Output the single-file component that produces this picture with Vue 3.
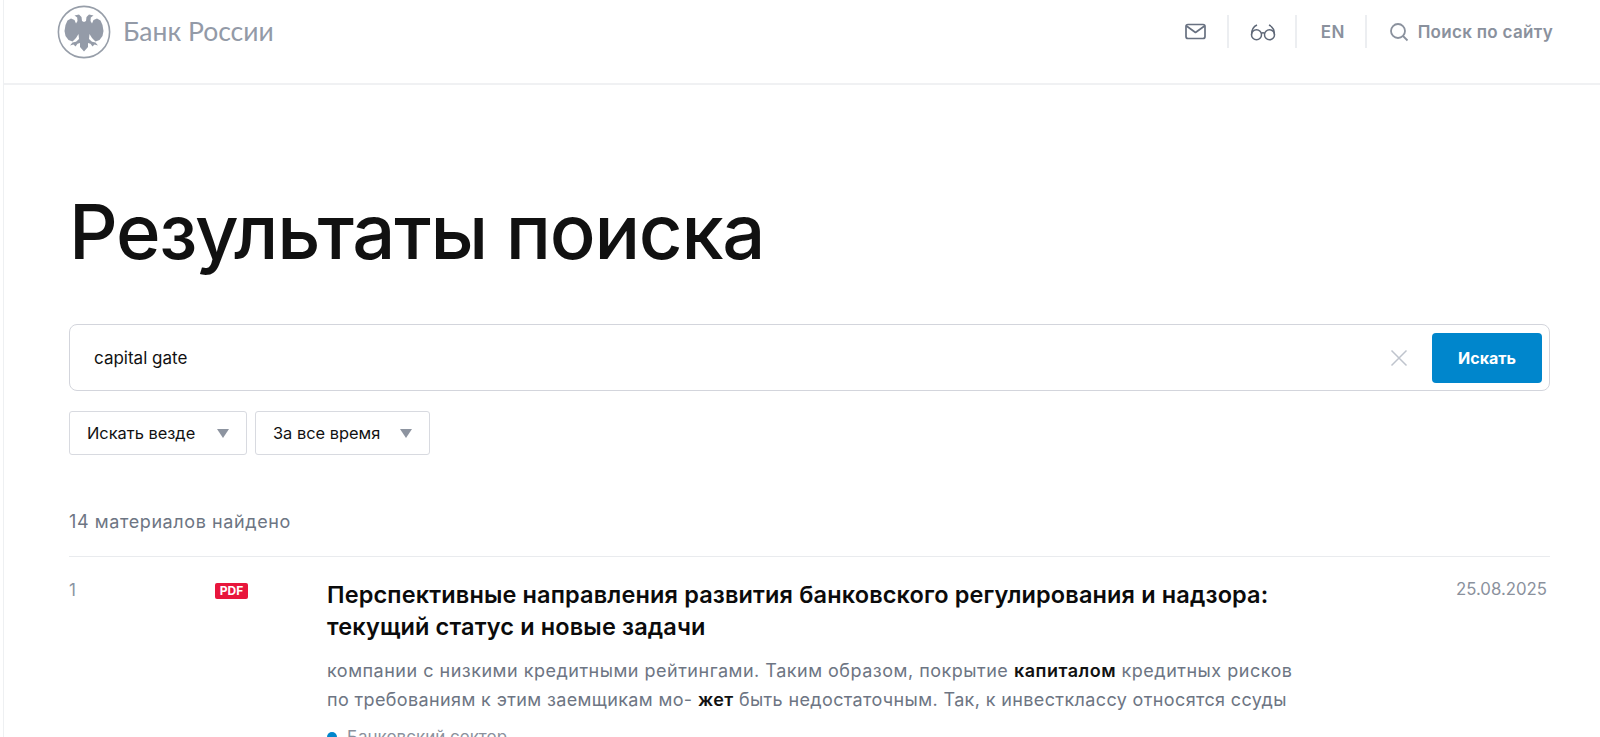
<script setup>
const results = [
  {
    n: 1,
    title: 'Перспективные направления развития банковского регулирования и надзора: текущий статус и новые задачи',
    date: '25.08.2025',
    tag: 'Банковский сектор'
  }
]
const wing = 'M27 17 L29 16 L29.500 12 L32 9.500 L36.500 10.500 L33.800 12.500 L33.500 16 L35 18.500 L36.500 15 L40 13.500 L43.500 15.500 L45.500 20 L46.500 26 L45.500 31 L42.500 35 L38.500 36.500 L35 33 L32.500 29 L32 34 L35 36.800 L38.500 37.500 L41 40.500 L37.500 39.500 L35.500 41.500 L33.500 38.800 L31 38 L31 42 L27 46.500 Z'
</script>

<template>
  <div class="page">
    <header class="header">
      <a class="logo">
        <svg class="emblem" viewBox="0 0 54 54" width="54" height="54">
          <circle cx="27" cy="27" r="25.6" fill="none" stroke="#979ea9" stroke-width="1.6" />
          <path fill="#949ba8" :d="wing" />
          <path fill="#949ba8" :d="wing" transform="matrix(-1 0 0 1 54 0)" />
        </svg>
        <span class="logo-text">Банк России</span>
      </a>
      <nav class="tools">
        <span class="tool tool-mail">
          <svg width="21" height="17" viewBox="0 0 21 17" fill="none" stroke="#687181" stroke-width="1.700" stroke-linejoin="round">
            <rect x="1" y="1.500" width="19" height="14" rx="2" />
            <path d="M1.500 3l9 6.500 9-6.500" />
          </svg>
        </span>
        <span class="tool tool-glasses">
          <svg width="26" height="18" viewBox="0 0 26 18" fill="none" stroke="#5f6878" stroke-width="1.500">
            <circle cx="6.500" cy="11.800" r="5" />
            <circle cx="19.500" cy="11.800" r="5" />
            <path d="M11.300 10.500c1-.8 2.400-.8 3.400 0M1.600 11.500c0-4.500 2-8 5.400-9.500M24.400 11.500c0-4.500-2-8-5.400-9.500" />
          </svg>
        </span>
        <span class="tool tool-lang">EN</span>
        <span class="tool tool-search">
          <svg width="20" height="20" viewBox="0 0 20 20" fill="none" stroke="#8a919d" stroke-width="1.800">
            <circle cx="9" cy="9" r="7" />
            <path d="M14 14l4.500 4.500" />
          </svg>
          Поиск по сайту
        </span>
      </nav>
    </header>

    <main class="content">
      <h1 class="heading">Результаты поиска</h1>

      <div class="search">
        <span class="query">capital gate</span>
        <svg class="clear" width="18" height="18" viewBox="0 0 18 18" fill="none" stroke="#bfc4cd" stroke-width="1.500">
          <path d="M1.500 1.500l15 15M16.500 1.500l-15 15" />
        </svg>
        <button class="submit">Искать</button>
      </div>

      <div class="filters">
        <div class="filter filter-place">Искать везде<i class="arrow"></i></div>
        <div class="filter filter-time">За все время<i class="arrow"></i></div>
      </div>

      <p class="count">14 материалов найдено</p>

      <article v-for="r in results" :key="r.n" class="result">
        <div class="num">{{ r.n }}</div>
        <div class="type"><span class="pdf">PDF</span></div>
        <div class="body">
          <h2 class="title">{{ r.title }}</h2>
          <p class="snippet">компании с низкими кредитными рейтингами. Таким образом, покрытие <b>капиталом</b> кредитных рисков <span class="tight">по требованиям к этим заемщикам мо- <b>жет</b> быть недостаточным. Так, к инвестклассу относятся ссуды</span></p>
          <div class="tag"><i class="dot"></i>{{ r.tag }}</div>
        </div>
        <div class="date">{{ r.date }}</div>
      </article>
    </main>
  </div>
</template>

<style>
html, body { margin: 0; height: 100%; overflow: hidden; background: #fff; }
</style>

<style scoped>
.page {
  height: 737px;
  overflow: hidden;
  margin-left: 3px;
  border-left: 1px solid #eef0f2;
  font-family: Inter, "Noto Sans", sans-serif;
  color: #111;
  box-sizing: border-box;
}
.header {
  height: 85px;
  box-sizing: border-box;
  border-bottom: 2px solid #f0f1f3;
  display: flex;
  justify-content: space-between;
  padding: 5px 47px 0 53px;
}
.logo { display: flex; align-items: flex-start; gap: 12px; }
.emblem { display: block; }
.logo-text {
  font-family: Lato, "Open Sans", sans-serif;
  font-weight: 400;
  font-size: 26.500px;
  line-height: 52px;
  color: #939aa7;
}
.tools { display: flex; align-items: flex-start; padding-top: 10px; }
.tool {
  height: 33px;
  display: flex;
  align-items: center;
  border-left: 2px solid #eceef1;
  color: #8a919d;
  font-weight: 600;
  font-size: 17px;
  letter-spacing: .3px;
}
.tool-mail { border-left: 0; padding-right: 21px; }
.tool-glasses { padding: 0 19px 0 21px; }
.tool-lang { padding: 0 20px 0 24px; }
.tool-search { gap: 9px; padding-left: 22px; }
.content { padding: 0 50px 0 65px; }
.heading {
  margin: 98px 0 0;
  font-size: 76px;
  line-height: 96px;
  font-weight: 500;
  letter-spacing: -1.300px;
  color: #111;
}
.search {
  margin-top: 45px;
  height: 67px;
  box-sizing: border-box;
  border: 1px solid #d3d5dc;
  border-radius: 8px;
  display: flex;
  align-items: center;
  padding: 0 7px 0 24px;
}
.query { flex: 1; font-size: 17px; color: #111; }
.clear { margin-right: 24px; }
.submit {
  width: 110px;
  height: 50px;
  border: 0;
  border-radius: 4px;
  background: #0086cc;
  color: #fff;
  font: 700 16px Inter, sans-serif;
}
.filters { display: flex; gap: 8px; margin-top: 20px; }
.filter {
  height: 44px;
  box-sizing: border-box;
  border: 1px solid #d8dae0;
  border-radius: 3px;
  display: flex;
  align-items: center;
  justify-content: space-between;
  padding: 0 17px;
  font-size: 16.400px;
  color: #111;
}
.filter-place { width: 178px; }
.filter-time { width: 175px; }
.arrow {
  width: 0;
  height: 0;
  border-left: 6.500px solid transparent;
  border-right: 6.500px solid transparent;
  border-top: 9px solid #8d94a0;
}
.count {
  margin: 55px 0 0;
  font-size: 18px;
  letter-spacing: .6px;
  line-height: 24px;
  color: #6d7583;
  padding-bottom: 22px;
  border-bottom: 1px solid #e9ebee;
}
.result { display: flex; padding-top: 22px; }
.num { width: 146px; padding-top: 1px; font-size: 17px; line-height: 20px; color: #8a93a3; }
.type { width: 112px; }
.pdf {
  display: block;
  width: 33px;
  height: 16px;
  margin-top: 4px;
  border-radius: 2px;
  background: #e8163c;
  color: #fff;
  font-size: 12px;
  font-weight: 700;
  line-height: 16px;
  text-align: center;
}
.body { width: 975px; flex: none; }
.title {
  margin: 0;
  font-size: 23.500px;
  letter-spacing: .14px;
  line-height: 32px;
  font-weight: 600;
  color: #0b0b0b;
}
.snippet {
  margin: 13px 0 0;
  font-size: 18px;
  letter-spacing: .5px;
  line-height: 29px;
  color: #6d7583;
}
.tight { letter-spacing: .37px; }
.snippet b { font-weight: 600; color: #111; }
.tag {
  display: flex;
  align-items: center;
  gap: 10px;
  margin-top: 13px;
  font-size: 17px;
  line-height: 20px;
  color: #8a919d;
}
.dot { width: 10px; height: 10px; border-radius: 50%; background: #0086cc; }
.date { margin-left: auto; font-size: 16.800px; line-height: 20px; color: #8a919d; padding-right: 3px; }
</style>
